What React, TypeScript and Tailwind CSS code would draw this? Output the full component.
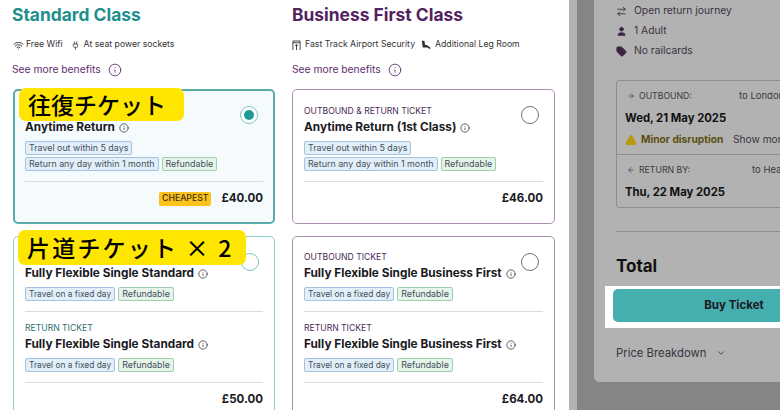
import { ArrowLeft, ArrowRight, ArrowLeftRight, ChevronDown, Info, Plug, Tag, TriangleAlert, User, Wifi } from 'lucide-react';

const font = { fontFamily: 'Inter, "Noto Sans", sans-serif' };

function Chip({ kind, children }: { kind: 'blue' | 'green'; children: string }) {
  const color = kind === 'blue' ? 'border-[#a3c3e0] bg-[#e2eff9]' : 'border-[#a0cdb0] bg-[#e6f5ea]';
  const size = children === 'Travel on a fixed day' ? 'text-[8.4px]' : 'text-[8.9px]';
  return (
    <span className={`h-[14px] flex items-center px-[3px] rounded-[2px] border text-[#3f4f5c] whitespace-nowrap ${size} ${color}`}>
      {children}
    </span>
  );
}

function Ticket({ label, labelColor, title, chips }: { label?: string; labelColor: string; title: string; chips: string[][] }) {
  return (
    <div className="flex flex-col">
      <div className={`h-[12px] mt-[1px] flex items-center text-[8.6px] ${labelColor}`}>{label}</div>
      <div className="h-[20px] mt-[1px] flex items-center gap-1 text-[11.8px] font-bold text-[#1a1a22] whitespace-nowrap">
        {title}
        <Info className="w-[10px] h-[10px] text-[#444]" />
      </div>
      <div className="mt-[3px] flex flex-col gap-[2px]">
        {chips.map((row, i) => (
          <div key={i} className="flex gap-[3px]">
            {row.map((c) => (
              <Chip key={c} kind={c === 'Refundable' ? 'green' : 'blue'}>{c}</Chip>
            ))}
          </div>
        ))}
      </div>
      <div className="mt-[10px] h-px bg-[#dcdcdc]" />
    </div>
  );
}

function Radio({ color, selected }: { color: string; selected?: boolean }) {
  return (
    <div className={`absolute right-[15px] w-[18px] h-[18px] rounded-full border flex items-center justify-center bg-white ${selected ? 'top-[15px]' : 'top-[16px]'} ${color}`}>
      {selected && <div className="w-[10px] h-[10px] rounded-full bg-[#1f9a96]" />}
    </div>
  );
}

function Price({ value, cheapest }: { value: string; cheapest?: boolean }) {
  return (
    <div className="mt-[8px] h-[18px] flex items-center justify-end gap-[10px]">
      {cheapest && (
        <span className="h-[14px] px-[3px] flex items-center rounded-[2px] bg-[#fdc31c] text-[8.7px] font-medium text-[#3a2f10]">CHEAPEST</span>
      )}
      <span className="text-[11.5px] font-bold text-[#1a1a22]">{value}</span>
    </div>
  );
}

function Sticker({ className, children }: { className: string; children: string }) {
  return (
    <div
      className={`absolute left-[4px] flex items-center pl-[9px] rounded-[7px] bg-[#ffe600] text-[23px] font-medium text-black whitespace-nowrap ${className}`}
      style={{ fontFamily: '"Noto Sans CJK JP", sans-serif' }}
    >
      {children}
    </div>
  );
}

const returnChips = [['Travel out within 5 days'], ['Return any day within 1 month', 'Refundable']];
const singleChips = [['Travel on a fixed day', 'Refundable']];

export default function App() {
  return (
    <div className="w-[780px] h-[410px] flex overflow-hidden bg-[#868486]" style={font}>
      <main className="w-[569px] shrink-0 bg-white pl-[13px] pr-[14px] grid grid-cols-[262px_263px] gap-x-[17px] content-start">
        {/* Standard */}
        <section className="flex flex-col">
          <h2 className="h-[31px] -ml-[1px] flex items-center text-[17.4px] font-bold text-[#1f8f8c]">Standard Class</h2>
          <div className="mt-[6px] h-[16px] flex items-center text-[8.7px] text-[#333]">
            <Wifi className="w-[11px] h-[11px] mr-[2px]" />
            <span>Free Wifi</span>
            <Plug className="w-[9px] h-[9px] ml-[8px] mr-[4px]" />
            <span>At seat power sockets</span>
          </div>
          <div className="h-[33px] -ml-px flex items-center gap-[7px] text-[10.3px] text-[#5e2d6e]">
            See more benefits
            <Info className="w-[14px] h-[14px]" strokeWidth={1.5} />
          </div>
          <div className="relative h-[135px] mt-[3px] rounded-[5px] border-2 border-[#5aacaa] bg-[#f5fbfc] px-[10px] pt-[13px]">
            <Radio color="border-[#7fc4c2]" selected />
            <Ticket labelColor="text-[#2f6f6c]" title="Anytime Return" chips={returnChips} />
            <Price value="£40.00" cheapest />
            <Sticker className="w-[165px] h-[33px] -top-[3px]">往復チケット</Sticker>
          </div>
          <div className="relative h-[200px] mt-[12px] rounded-[5px] border-[1.5px] border-[#8fcfcc] bg-white px-[11px] pt-[13px]">
            <Radio color="border-[#7fc4c2]" />
            <Ticket label="OUTBOUND TICKET" labelColor="text-[#2f6f6c]" title="Fully Flexible Single Standard" chips={singleChips} />
            <div className="mt-[9px]">
              <Ticket label="RETURN TICKET" labelColor="text-[#2f6f6c]" title="Fully Flexible Single Standard" chips={singleChips} />
            </div>
            <Price value="£50.00" />
            <Sticker className="w-[228px] h-[35px] -top-[7px] tracking-[2.2px]">片道チケット × 2</Sticker>
          </div>
        </section>

        {/* Business First */}
        <section className="flex flex-col">
          <h2 className="h-[31px] flex items-center text-[17.4px] font-bold text-[#53235f]">Business First Class</h2>
          <div className="mt-[6px] h-[16px] flex items-center text-[8.7px] text-[#333]">
            <svg viewBox="0 0 10 12" className="w-[9px] h-[11px] mr-[4px]" fill="none" stroke="#333" strokeWidth="1">
              <path d="M1 11V1h8v10M1 3h8M5 5v6M3.5 6.5 5 5l1.5 1.5" />
            </svg>
            <span>Fast Track Airport Security</span>
            <svg viewBox="0 0 12 12" className="w-[10px] h-[10px] ml-[6px] mr-[4px]" fill="#333">
              <path d="M1 1h3l1 5h2l4 3v2L7.500 9H2z" />
            </svg>
            <span>Additional Leg Room</span>
          </div>
          <div className="h-[33px] flex items-center gap-[7px] text-[10.3px] text-[#5e2d6e]">
            See more benefits
            <Info className="w-[14px] h-[14px]" strokeWidth={1.5} />
          </div>
          <div className="relative h-[135px] mt-[3px] rounded-[5px] border border-[#a990ae] bg-white px-[11px] pt-[14px]">
            <Radio color="border-[#7d6a82]" />
            <Ticket label="OUTBOUND & RETURN TICKET" labelColor="text-[#4a2a55]" title="Anytime Return (1st Class)" chips={returnChips} />
            <Price value="£46.00" />
          </div>
          <div className="relative h-[200px] mt-[12px] rounded-[5px] border border-[#a990ae] bg-white px-[11px] pt-[13px]">
            <Radio color="border-[#7d6a82]" />
            <Ticket label="OUTBOUND TICKET" labelColor="text-[#4a2a55]" title="Fully Flexible Single Business First" chips={singleChips} />
            <div className="mt-[9px]">
              <Ticket label="RETURN TICKET" labelColor="text-[#4a2a55]" title="Fully Flexible Single Business First" chips={singleChips} />
            </div>
            <Price value="£64.00" />
          </div>
        </section>
      </main>

      {/* Dimmed summary */}
      <div className="w-[8px] shrink-0 bg-[#b3b3b3]" />
      <div className="w-[17px] shrink-0" />
      <aside className="w-[186px] shrink-0 h-[382px] rounded-bl-[5px] bg-[#b2b2b2] overflow-hidden pl-[22px]">
        <div className="w-[260px] flex flex-col">
          <div className="flex flex-col gap-[6px] text-[10.3px] text-[#3b3340]">
            <div className="h-[14px] mt-[4px] flex items-center gap-[7px]"><ArrowLeftRight className="w-[11px] h-[11px] -scale-y-100" />Open return journey</div>
            <div className="h-[14px] flex items-center gap-[7px]"><User className="w-[11px] h-[11px] fill-[#3a2440] text-[#3a2440]" />1 Adult</div>
            <div className="h-[14px] flex items-center gap-[7px]"><Tag className="w-[11px] h-[11px] fill-[#3a2440] text-[#3a2440]" />No railcards</div>
          </div>

          <div className="mt-[22px] h-[128px] rounded-[3px] border border-[#8e8e8e] flex flex-col">
            <div className="h-[73px] box-content border-b border-[#8e8e8e] px-[8px]">
              <div className="mt-[8px] flex items-center text-[8.7px] text-[#3b3b3b]">
                <ArrowRight className="w-[8px] h-[8px] ml-[2px] mr-[4px]" />
                <span className="w-[100px]">OUTBOUND:</span>
                <span className="text-[9.5px]">to London</span>
              </div>
              <div className="mt-[7px] text-[11.3px] font-bold text-[#111]">Wed, 21 May 2025</div>
              <div className="mt-[5px] flex items-center text-[10.2px]">
                <TriangleAlert className="w-[12px] h-[12px] mr-[4px] fill-[#b89a12] text-[#b89a12]" />
                <span className="font-bold text-[#5c4f10] w-[92px]">Minor disruption</span>
                <span className="text-[#3b3340]">Show more</span>
              </div>
            </div>
            <div className="px-[8px] pt-[8px]">
              <div className="flex items-center text-[8.7px] text-[#3b3b3b]">
                <ArrowLeft className="w-[8px] h-[8px] ml-[2px] mr-[4px]" />
                <span className="w-[113px]">RETURN BY:</span>
                <span className="text-[9.5px]">to Heathrow</span>
              </div>
              <div className="mt-[7px] text-[11.3px] font-bold text-[#111]">Thu, 22 May 2025</div>
            </div>
          </div>

          <div className="mt-[23px] h-px bg-[#8e8e8e]" />
          <div className="mt-[25px] text-[17px] leading-[18px] font-bold text-[#111]">Total</div>
          {/* white highlight round the button */}
          <div className="mt-[11px] -ml-[11px] h-[42px] w-[260px] bg-white pl-[8px] pt-[3px]">
            <button className="w-[242px] h-[33px] rounded-[5px] bg-[#45aeae] text-[11.5px] font-bold text-[#1a1a22]">Buy Ticket</button>
          </div>
          <div className="mt-[17px] flex items-center gap-[10px] text-[11.3px] text-[#3b3340]">
            Price Breakdown
            <ChevronDown className="w-[10px] h-[10px]" />
          </div>
        </div>
      </aside>
    </div>
  );
}
